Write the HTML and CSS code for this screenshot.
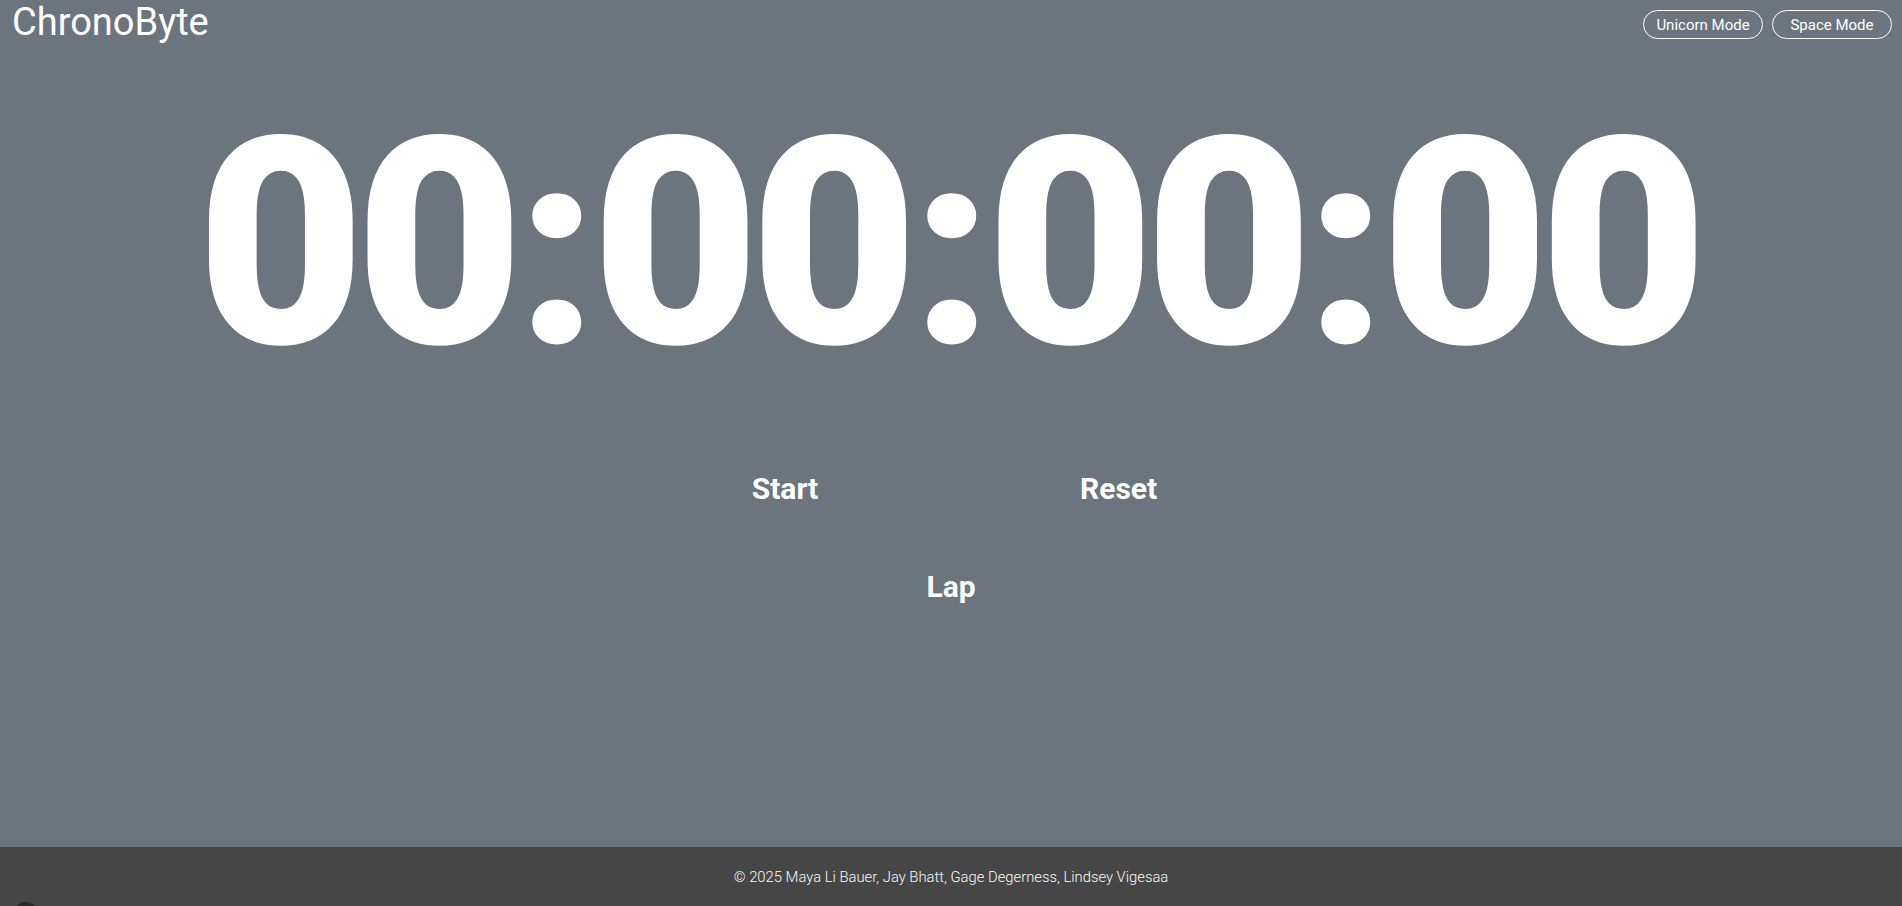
FILE: index.html
```html
<!DOCTYPE html>
<html lang="en">
<head>
<meta charset="utf-8">
<title>ChronoByte</title>
<link rel="stylesheet" href="styles.css">
</head>
<body>
<div class="page">
  <header class="topbar">
    <h1 class="brand">ChronoByte</h1>
    <nav class="modes">
      <button class="mode-btn">Unicorn Mode</button>
      <button class="mode-btn">Space Mode</button>
    </nav>
  </header>
  <main class="main">
    <div class="timer">00<span class="sep">:</span>00<span class="sep">:</span>00<span class="sep">:</span>00</div>
    <div class="controls">
      <div class="row">
        <button class="ctl">Start</button>
        <button class="ctl">Reset</button>
      </div>
      <div class="row single">
        <button class="ctl">Lap</button>
      </div>
    </div>
  </main>
  <footer class="footer">© 2025 Maya Li Bauer, Jay Bhatt, Gage Degerness, Lindsey Vigesaa</footer>
</div>
<div class="corner-dot"></div>
</body>
</html>
```

FILE: styles.css
```css
* { box-sizing: border-box; }
html, body { margin: 0; padding: 0; height: 100%; }
body {
  background: #6c757d;
  color: #fff;
  font-family: Roboto, "Liberation Sans", sans-serif;
  overflow: hidden;
}
.page {
  min-height: 100vh;
  display: flex;
  flex-direction: column;
}
.topbar {
  display: flex;
  justify-content: space-between;
  align-items: flex-start;
  padding: 0 10px 0 12px;
}
.brand {
  margin: 0;
  font-size: 38px;
  font-weight: 400;
  line-height: 1;
  padding-top: 3px;
  height: 42px;
}
.modes {
  display: flex;
  gap: 9px;
  padding-top: 10px;
}
.mode-btn {
  background: transparent;
  color: #fff;
  border: 1px solid #fff;
  border-radius: 15px;
  height: 29px;
  width: 120px;
  padding: 0;
  font-family: Roboto, "Liberation Sans", sans-serif;
  font-size: 15px;
  text-align: center;
  cursor: pointer;
}
.main {
  flex: 1;
  display: flex;
  flex-direction: column;
  align-items: center;
}
.timer {
  font-size: 290px;
  font-weight: 900;
  line-height: 1;
  margin-top: 57px;
  letter-spacing: -9.5px;
  padding-right: 7px;
}
.sep {
  display: inline-block;
  transform: scale(0.93, 0.94);
  transform-origin: 50% 84%;
}
.controls {
  display: flex;
  flex-direction: column;
  align-items: center;
  margin-top: 82px;
  gap: 63px;
}
.row {
  display: flex;
  gap: 258px;
}
.ctl {
  background: transparent;
  border: none;
  color: #fff;
  font-family: Roboto, "Liberation Sans", sans-serif;
  font-size: 30px;
  font-weight: 700;
  padding: 0;
  width: 74px;
  text-align: center;
  cursor: pointer;
}
.footer {
  height: 59px;
  background: #464646;
  display: flex;
  align-items: center;
  justify-content: center;
  font-size: 14.8px;
  font-weight: 300;
  color: #fafafa;
}
.corner-dot {
  position: fixed;
  left: 14px;
  bottom: -20px;
  width: 24px;
  height: 24px;
  border-radius: 50%;
  background: #2a2a2a;
}
```
